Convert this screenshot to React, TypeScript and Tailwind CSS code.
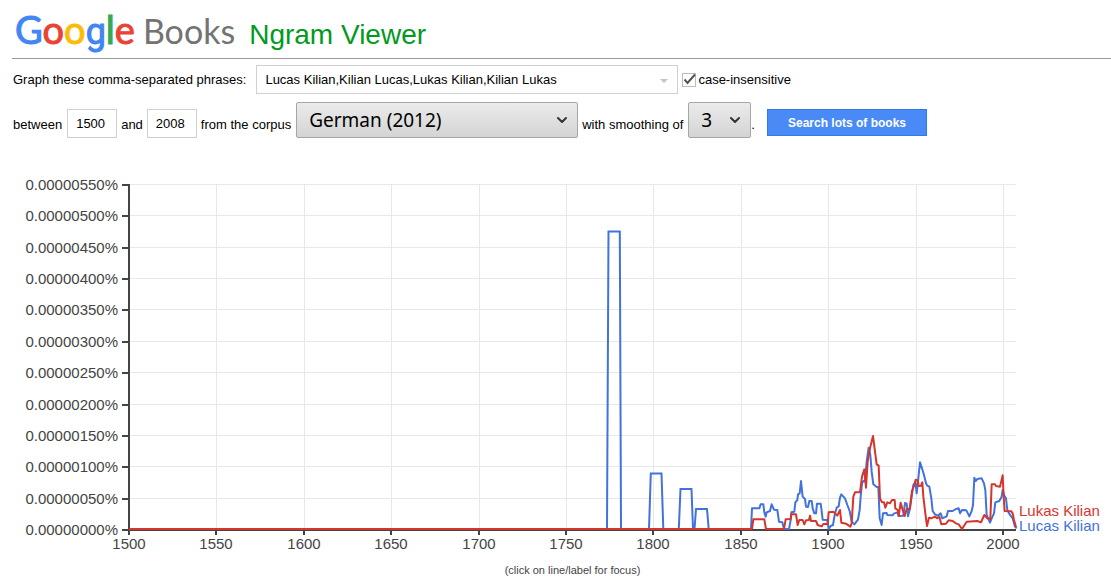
import React, { useState } from 'react';
import { ChevronDown } from 'lucide-react';

type SeriesName = 'Lukas Kilian' | 'Lucas Kilian';

interface Series {
  name: SeriesName;
  color: string;
  labelY: number;
  early: string;
  late: string;
}

const LEFT = 129;
const RIGHT = 1016;
const TOP = 14;
const BASE = 359;

const years = [1500, 1550, 1600, 1650, 1700, 1750, 1800, 1850, 1900, 1950, 2000];
const shares = [550, 500, 450, 400, 350, 300, 250, 200, 150, 100, 50, 0];

const xOf = (year: number) => Math.round(LEFT + (year - 1500) * 1.748);
const yOf = (share: number) => Math.round(BASE - (share * (BASE - TOP)) / 550);

// "early" is in plot units, "late" (1850 onwards) is in thirds of a plot unit
const series: Series[] = [
  {
    name: 'Lucas Kilian',
    color: '#4272db',
    labelY: 361,
    early:
      '129,359 607,359 608.5,61.5 619.8,61.5 621,359 649,359 650.8,303.5 661.5,303.5 663.3,359 678.8,359 680.5,319 691.5,319 693,359 694.5,359 696,339 707,339 708.7,359 751,359',
    late:
      '33,312 36,250 58,250 62,238 70,238 73,262 77,275 80,262 90,258 95,238 102,254 112,255 117,290 127,292 132,312 147,312 152,285 154,262 163,260 166,232 172,225 174,208 179,205 183,168 188,215 195,222 198,245 204,246 208,228 215,228 218,250 223,265 228,265 231,236 242,236 245,258 248,284 262,285 266,312 272,303 279,300 284,270 290,248 296,244 300,218 304,208 315,220 322,240 329,258 335,290 343,298 354,284 359,255 362,215 366,175 370,168 375,170 380,110 386,68 391,90 395,140 400,178 410,186 415,186 419,280 425,300 429,265 440,264 442,270 458,271 461,266 473,262 476,273 490,272 495,234 500,236 504,274 510,250 515,215 520,180 526,170 530,205 535,160 540,112 546,130 552,150 558,175 562,182 568,185 574,220 578,258 585,268 593,272 602,265 607,280 620,274 624,258 638,258 648,252 656,250 660,265 666,255 679,256 688,274 695,258 699,240 703,158 707,168 712,162 725,160 732,175 736,195 740,270 750,293 756,278 762,265 766,232 778,228 785,215 788,195 793,212 798,220 802,255 810,270 818,280 825,305 830,310',
  },
  {
    name: 'Lukas Kilian',
    color: '#d6352c',
    labelY: 346,
    early: '129,359 752,359',
    late:
      '36,312 40,283 73,283 78,312 132,312 137,283 152,282 154,268 168,268 173,300 178,285 188,285 193,298 198,286 207,285 210,272 213,288 228,288 233,300 245,304 250,297 263,297 266,262 280,260 285,265 292,272 300,255 304,293 318,296 331,305 335,295 340,215 345,202 360,202 366,155 373,133 378,188 383,110 390,70 399,33 405,80 410,118 416,122 420,220 426,232 432,232 436,248 442,232 450,235 456,225 464,225 466,250 473,255 476,273 482,233 488,255 494,273 500,252 509,252 516,198 524,178 527,164 533,166 536,183 543,182 547,172 550,215 556,265 561,303 567,278 574,280 584,275 592,280 598,275 604,298 618,296 626,286 638,288 648,295 656,298 666,312 680,290 712,288 723,292 733,270 742,280 751,282 755,178 765,178 768,183 780,185 788,151 791,215 794,258 814,259 818,265 822,285 828,306',
  },
];

interface SelectBoxProps {
  id: string;
  className: string;
  defaultValue: string;
  options: string[];
}

const SelectBox: React.FC<SelectBoxProps> = ({ id, className, defaultValue, options }) => (
  <span className={`relative inline-block ${className}`}>
    <select
      id={id}
      defaultValue={defaultValue}
      className="block h-9 w-full appearance-none rounded-xs border border-[#a6a6a6] bg-linear-to-b from-[#ebebeb] to-[#d4d4d4] pl-3 font-['Noto_Sans',sans-serif] text-[19px] leading-7 text-black"
    >
      {options.map((option) => (
        <option key={option}>{option}</option>
      ))}
    </select>
    <ChevronDown className="pointer-events-none absolute top-2.5 right-2 h-4 w-4 text-[#333]" strokeWidth={3} />
  </span>
);

const Logo: React.FC = () => (
  <a href="#books" className="flex items-baseline gap-2 font-['Lato',sans-serif] leading-none whitespace-nowrap">
    <span className="text-[38px] [-webkit-text-stroke:1px]">
      <span className="text-[#4285f4]">G</span>
      <span className="text-[#ea4335]">o</span>
      <span className="text-[#fbbc05]">o</span>
      <span className="font-['Roboto',sans-serif] text-[36px] text-[#4285f4]">g</span>
      <span className="text-[#34a853]">l</span>
      <span className="text-[#ea4335]">e</span>
    </span>
    <span className="text-[34px] text-[#737373]">Books</span>
  </a>
);

const Chart: React.FC = () => {
  const [focused, setFocused] = useState<SeriesName | null>(null);

  const toggle = (name: SeriesName) => setFocused((prev) => (prev === name ? null : name));
  const opacityOf = (name: SeriesName) => (focused && focused !== name ? 0.25 : 1);

  return (
    <svg viewBox="0 0 1111 390" className="block h-auto w-full" role="img" aria-label="Ngram frequency by year">
      <g stroke="#e8e8e8" strokeWidth="1">
        {years.slice(1).map((year) => (
          <line key={year} x1={xOf(year) + 0.5} x2={xOf(year) + 0.5} y1={TOP} y2={BASE} />
        ))}
        {shares.slice(0, -1).map((share) => (
          <line key={share} x1={LEFT} x2={RIGHT} y1={yOf(share) + 0.5} y2={yOf(share) + 0.5} />
        ))}
      </g>

      {/* Axes */}
      <g stroke="#444" strokeWidth="2">
        <line x1={LEFT} x2={LEFT} y1={TOP} y2={365} />
        <line x1={LEFT} x2={RIGHT} y1={BASE + 1} y2={BASE + 1} />
        {years.map((year) => (
          <line key={year} x1={xOf(year)} x2={xOf(year)} y1={BASE} y2={365} />
        ))}
        {shares.map((share) => (
          <line key={share} x1={122} x2={LEFT} y1={yOf(share) + 1} y2={yOf(share) + 1} />
        ))}
      </g>
      <g fill="#444" className="font-['Liberation_Sans',Arial,sans-serif] text-[15px]">
        {shares.map((share) => (
          <text key={share} x={118} y={yOf(share) + 6} textAnchor="end">
            {`0.00000${String(share).padStart(3, '0')}%`}
          </text>
        ))}
        {years.map((year) => (
          <text key={year} x={xOf(year)} y={379} textAnchor="middle">
            {year}
          </text>
        ))}
      </g>

      {/* Lines and their labels */}
      {series.map((s) => (
        <g key={s.name} opacity={opacityOf(s.name)} onClick={() => toggle(s.name)} className="cursor-pointer">
          <polyline points={s.early} fill="none" stroke={s.color} strokeWidth="2" />
          <g transform="translate(740 255) scale(0.33333)">
            <polyline points={s.late} fill="none" stroke={s.color} strokeWidth="6" strokeLinejoin="round" />
          </g>
          <text
            x={1019}
            y={s.labelY}
            fill={s.color}
            className="font-['Liberation_Sans',Arial,sans-serif] text-[15px]"
          >
            {s.name}
          </text>
        </g>
      ))}
    </svg>
  );
};

const App: React.FC = () => {
  const [phrases, setPhrases] = useState('Lucas Kilian,Kilian Lucas,Lukas Kilian,Kilian Lukas');

  return (
    <div className="bg-white font-['Liberation_Sans',Arial,sans-serif] text-[13px] text-black">
      <header className="ml-3 flex h-[59px] items-baseline gap-3.5 border-b border-[#999] pt-2.5 pl-[3px]">
        <Logo />
        <h1 className="text-[28px] leading-none whitespace-nowrap text-[#009a1c]">Ngram Viewer</h1>
      </header>

      <form onSubmit={(e) => e.preventDefault()} className="pt-1.5 pl-[13px]">
        <div className="flex items-center">
          <label htmlFor="phrases">Graph these comma-separated phrases:</label>
          <span className="relative ml-2.5 w-[422px]">
            <input
              id="phrases"
              type="text"
              value={phrases}
              onChange={(e) => setPhrases(e.target.value)}
              className="block h-[29px] w-full border border-[#d0d0d0] px-2"
            />
            <svg viewBox="0 0 8 4" className="pointer-events-none absolute top-3.5 right-2.5 h-1 w-2 fill-[#c4c4c4]">
              <path d="M0 0h8L4 4z" />
            </svg>
          </span>
          <label className="ml-1 flex items-center gap-0.5">
            <span className="relative h-3.5 w-3.5">
              <input
                type="checkbox"
                defaultChecked
                className="peer block h-3.5 w-3.5 appearance-none border border-[#bbb] bg-white"
              />
              <svg
                viewBox="0 0 14 14"
                className="pointer-events-none invisible absolute inset-0 fill-none stroke-[#555] stroke-2 peer-checked:visible"
              >
                <path d="M2.5 6.5 5.5 10 13 1.5" />
              </svg>
            </span>
            case-insensitive
          </label>
        </div>

        <div className="mt-2 flex items-end whitespace-nowrap">
          <label htmlFor="from" className="pb-1">
            between
          </label>
          <input
            id="from"
            type="text"
            defaultValue="1500"
            className="ml-[5px] h-[29px] w-[50px] border border-[#d0d0d0] px-2"
          />
          <label htmlFor="to" className="ml-1 pb-1">
            and
          </label>
          <input
            id="to"
            type="text"
            defaultValue="2008"
            className="ml-1 h-[29px] w-[50px] border border-[#d0d0d0] px-2"
          />
          <label htmlFor="corpus" className="ml-1 pb-1">
            from the corpus
          </label>
          <SelectBox
            id="corpus"
            className="ml-[5px] w-[282px]"
            defaultValue="German (2012)"
            options={['English (2012)', 'French (2012)', 'German (2012)', 'Spanish (2012)']}
          />
          <label htmlFor="smoothing" className="ml-1 pb-1">
            with smoothing of
          </label>
          <SelectBox
            id="smoothing"
            className="ml-[5px] w-[63px]"
            defaultValue="3"
            options={['0', '1', '2', '3', '4', '5', '10']}
          />
          <span className="pb-1">.</span>
          <button
            type="submit"
            className="mb-0.5 ml-3 h-[27px] w-40 border border-[#3079ed] bg-[#4a8af6] text-xs font-bold text-white"
          >
            Search lots of books
          </button>
        </div>
      </form>

      <main className="pt-8">
        <Chart />
        <p className="pt-0.5 pl-8.5 text-center text-[11px] text-[#444]">(click on line/label for focus)</p>
      </main>
    </div>
  );
};

export default App;
